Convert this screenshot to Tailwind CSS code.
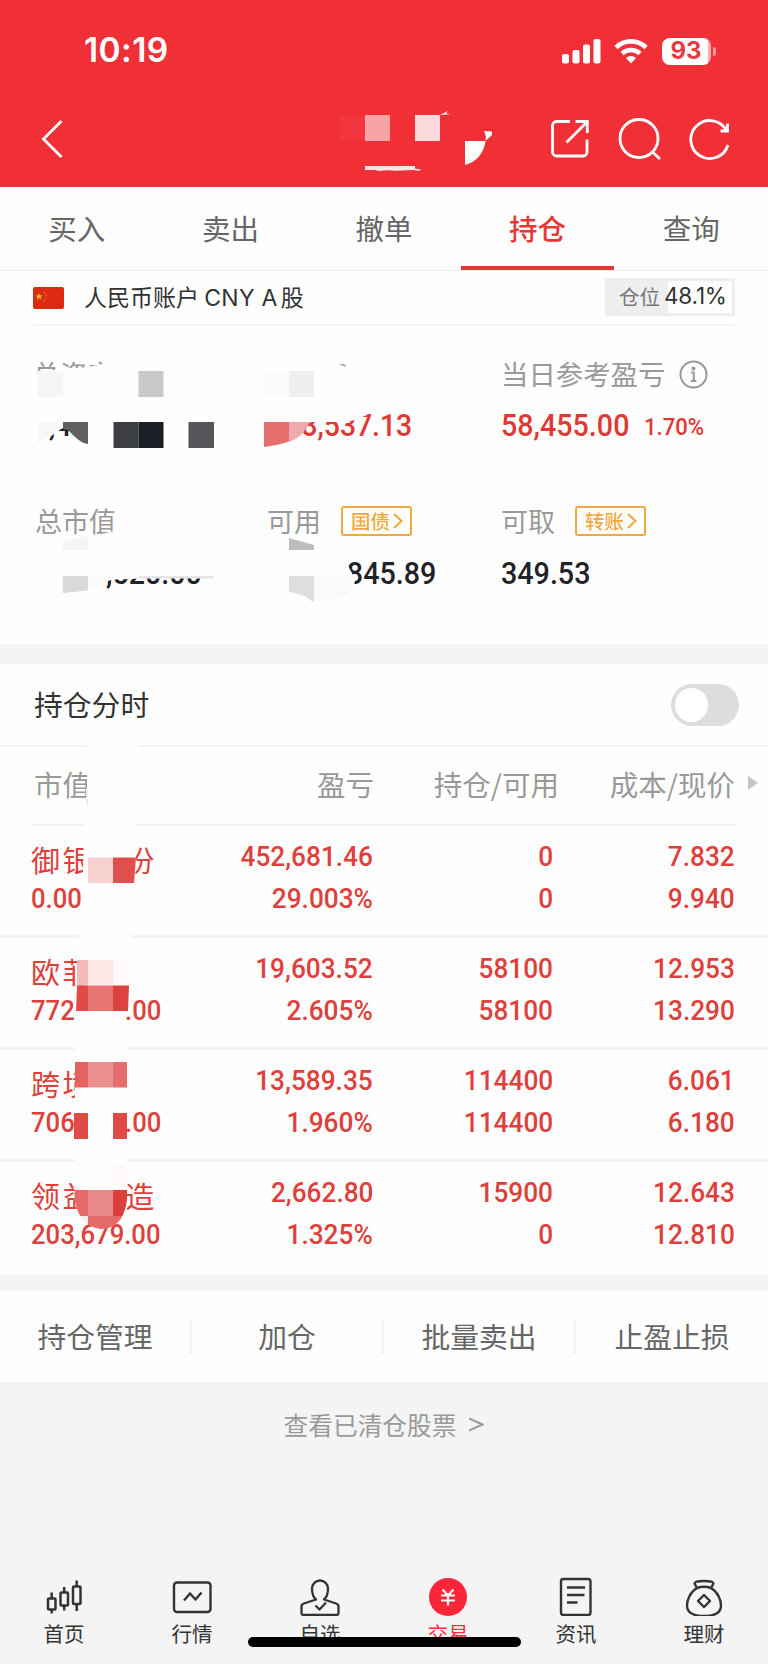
<!DOCTYPE html>
<html lang="zh-CN">
<head>
  <meta charset="UTF-8" />
  <meta name="viewport" content="width=device-width, initial-scale=1.0" />
  <title>持仓</title>
  <script src="https://cdn.jsdelivr.net/npm/@tailwindcss/browser@4"></script>
</head>
<body class="bg-[#f4f4f4] font-['Noto_Sans_CJK_SC',sans-serif]">

  <div class="relative w-[768px] h-[1664px] overflow-hidden flex flex-col">

    <!-- Status bar + nav -->
    <header class="h-[187px] shrink-0 bg-[#f12f37] text-white flex flex-col">
      <div class="h-[102px] flex items-center justify-between pl-[84px] pr-[52px]">
        <span class="font-['Inter',sans-serif] font-semibold text-[33.500px] leading-none tracking-[0.400px]">10:19</span>
        <div class="flex items-center">
          <svg class="w-[39px] h-[26px]" viewBox="0 0 39 26" fill="currentColor">
            <rect x="0" y="16" width="7" height="9.5" rx="2" />
            <rect x="10.5" y="12" width="7" height="13.5" rx="2" />
            <rect x="21" y="6.500" width="7" height="19" rx="2" />
            <rect x="31.500" y="1" width="7" height="24.500" rx="2" />
          </svg>
          <svg class="ml-[13px] w-[34px] h-[26px]" viewBox="0 0 34 26" fill="none" stroke="currentColor" stroke-width="4.6">
            <path d="M2 9.500a21.500 21.500 0 0 1 30 0" />
            <path d="M8 15.500a13.200 13.200 0 0 1 18 0" />
            <path d="M17 25.500l-5-5.500a7.500 7.500 0 0 1 10 0z" fill="currentColor" stroke="none" />
          </svg>
          <div class="ml-[14px] w-[49px] h-[27px] rounded-[8px] bg-[linear-gradient(to_right,#fff_94%,#f9a9ac_94%)] flex items-center justify-center pr-[1px]">
            <span class="font-['Inter',sans-serif] font-bold text-[24px] leading-none text-[#e93840]">93</span>
          </div>
          <div class="ml-[2px] w-[3px] h-[9px] rounded-r-full bg-[#f89a9e]"></div>
        </div>
      </div>
      <div class="h-[74px] flex items-center justify-between pl-[40px] pr-[37px]">
        <svg class="w-[24px] h-[40px]" viewBox="0 0 24 40" fill="none" stroke="currentColor" stroke-width="2.800"><path d="M21.500 2L3.500 20l18 18" /></svg>
        <div class="flex items-center gap-[27px]">
          <svg class="w-[42px] h-[42px]" viewBox="0 0 42 42" fill="none" stroke="currentColor" stroke-width="2.800">
            <path d="M21 3.500H7.500a4 4 0 0 0-4 4V34a4 4 0 0 0 4 4H34a4 4 0 0 0 4-4V21.500" />
            <path d="M17.500 24.500L38 4M26.500 3.500H38.300V15" />
          </svg>
          <svg class="w-[44px] h-[44px]" viewBox="0 0 44 44" fill="none" stroke="currentColor" stroke-width="2.800">
            <circle cx="21" cy="21.500" r="19" /><path d="M34 34.500l8 7.500" />
          </svg>
          <svg class="w-[42px] h-[44px]" viewBox="0 0 42 44" fill="none" stroke="currentColor" stroke-width="2.800">
            <path d="M39 28a19 19 0 1 1-1.500-14.500" /><path d="M38.500 6.500v7.500h-7" />
          </svg>
        </div>
      </div>
    </header>

    <!-- Tabs -->
    <nav class="h-[84px] shrink-0 bg-[#fefefe] border-b border-[#eeeeee] grid grid-cols-5 text-center text-[28.500px] leading-[81px] text-[#666]">
      <div>买入</div>
      <div>卖出</div>
      <div>撤单</div>
      <div class="text-[#e53935] font-medium shadow-[inset_0_-4px_#e03835]">持仓</div>
      <div>查询</div>
    </nav>

    <!-- Account -->
    <section class="h-[373px] shrink-0 bg-[#fefefe] px-[33px]">
      <div class="h-[55px] border-b-2 border-[#f6f6f6] flex items-center">
        <svg class="w-[31px] h-[22px] rounded-[2px]" viewBox="0 0 31 22">
          <rect width="31" height="22" fill="#dc2a10" />
          <path d="M6 6l1 2.600h2.700L7.500 10l1 2.700L6 11l-2.400 1.700.9-2.700-2.200-1.400H5z" fill="#fbc52c" />
          <circle cx="11" cy="5.500" r=".8" fill="#f08a20" /><circle cx="13" cy="8" r=".8" fill="#f08a20" />
          <circle cx="13" cy="11" r=".8" fill="#f08a20" /><circle cx="11" cy="13.500" r=".8" fill="#f08a20" />
        </svg>
        <span class="ml-[20px] text-[23px] leading-none text-[#333] whitespace-nowrap">人民币账户 <span class="font-['Inter',sans-serif] text-[23px] tracking-[0.300px]">CNY A</span><span class="ml-[3px]">股</span></span>
        <div class="ml-auto -mt-[2px] w-[130px] h-[38px] border-[3px] border-[#eeeef2] bg-[linear-gradient(to_right,#eeeeef_48%,#fefefe_48%)] flex items-center pl-[11px]">
          <span class="text-[20.500px] leading-none text-[#777]">仓位</span>
          <span class="ml-[4px] font-['Inter',sans-serif] text-[22.500px] leading-none tracking-[-0.200px] text-[#333]">48.1%</span>
        </div>
      </div>

      <div class="pt-[25px] grid grid-cols-[232px_236px_1fr]">
        <div>
          <div class="h-[46px] flex items-center text-[27px] text-[#999]">总资产</div>
          <div class="h-[57px] flex items-center pl-[16px] font-['Roboto',sans-serif] font-medium text-[31.500px] text-[#1f2228]"><span class="scale-x-90 origin-left">,4</span></div>
        </div>
        <div>
          <div class="h-[46px] flex items-center pl-[2px] text-[27px] text-[#999]"></div>
          <div class="h-[57px] w-[147px] flex items-center justify-end font-['Roboto',sans-serif] font-medium text-[31.500px] text-[#e03835]"><span class="scale-x-90 origin-right">8,537.13</span></div>
        </div>
        <div>
          <div class="h-[46px] flex items-center text-[27.400px] text-[#999] whitespace-nowrap">当日参考盈亏
            <svg class="ml-[14px] w-[29px] h-[29px]" viewBox="0 0 29 29" fill="none" stroke="#999" stroke-width="2">
              <circle cx="14.500" cy="14.500" r="13" /><circle cx="14.500" cy="8.500" r="2" fill="#999" stroke="none" /><path d="M12 12.500h2.800V21M11.800 21h5.600" />
            </svg>
          </div>
          <div class="h-[57px] flex items-center font-['Roboto',sans-serif] font-medium text-[31.500px] text-[#e03835]">
            <span class="w-[143px]"><span class="inline-block scale-x-91 origin-left">58,455.00</span></span>
            <span class="mt-[5px] text-[23.500px] scale-x-94 origin-left">1.70%</span>
          </div>
        </div>
      </div>

      <div class="pt-[44px] grid grid-cols-[232px_236px_1fr]">
        <div>
          <div class="h-[46px] flex items-center pl-[2px] text-[27px] text-[#999]">总市值</div>
          <div class="h-[59px] flex items-center pl-[73px] font-['Roboto',sans-serif] font-medium text-[31.500px] text-[#1f2228]"><span class="scale-x-91 origin-left">,520.00</span></div>
        </div>
        <div>
          <div class="h-[46px] flex items-center pl-[2px] text-[27px] text-[#999]">可用
            <div class="ml-[20px] w-[71px] h-[30px] border-2 border-[#f2a93b] rounded-[3px] flex items-center pl-[8px] text-[19.500px] leading-none font-medium text-[#f2a93b]">国债
              <svg class="ml-[3px] w-[10px] h-[18px]" viewBox="0 0 10 18" fill="none" stroke="currentColor" stroke-width="2.200"><path d="M1 2l7.500 7L1 16" /></svg>
            </div>
          </div>
          <div class="h-[59px] w-[171px] flex items-center justify-end font-['Roboto',sans-serif] font-medium text-[31.500px] text-[#1f2228]"><span class="scale-x-91 origin-right">845.89</span></div>
        </div>
        <div>
          <div class="h-[46px] flex items-center text-[27px] text-[#999]">可取
            <div class="ml-[20px] w-[71px] h-[30px] border-2 border-[#f2a93b] rounded-[3px] flex items-center pl-[8px] text-[19.500px] leading-none font-medium text-[#f2a93b]">转账
              <svg class="ml-[3px] w-[10px] h-[18px]" viewBox="0 0 10 18" fill="none" stroke="currentColor" stroke-width="2.200"><path d="M1 2l7.500 7L1 16" /></svg>
            </div>
          </div>
          <div class="h-[59px] flex items-center font-['Roboto',sans-serif] font-medium text-[31.500px] text-[#1f2228]"><span class="scale-x-91 origin-left">349.53</span></div>
        </div>
      </div>
    </section>

    <!-- Holdings -->
    <section class="mt-[20px] h-[611px] shrink-0 bg-[#fefefe]">
      <div class="h-[83px] border-b-2 border-[#f4f4f4] flex items-center justify-between pl-[34px] pr-[29px]">
        <span class="text-[28.800px] leading-none text-[#333]">持仓分时</span>
        <div class="w-[68px] h-[42px] rounded-full bg-[#dddddd] p-1"><div class="w-[33px] h-[34px] rounded-full bg-white"></div></div>
      </div>
      <div class="relative h-[79px] mr-[33px] border-b-2 border-[#f0f0f0] ml-[33px] pb-[2px] grid grid-cols-[341px_185px_176px] items-center text-right text-[28.500px] leading-none text-[#999]">
        <div class="flex justify-between"><span class="pl-[1px]">市值</span><span>盈亏</span></div>
        <div>持仓/可用</div>
        <div>成本/现价</div>
        <svg class="absolute -right-[23px] top-[29px] w-[10px] h-[14px]" viewBox="0 0 10 14"><path d="M0 0l10 7-10 7z" fill="#c4c4c4" /></svg>
      </div>
      <div id="rows"></div>
    </section>

    <!-- Actions -->
    <section class="mt-[16px] h-[91px] shrink-0 bg-[#fefefe] grid grid-cols-4 items-center text-center text-[28.800px] text-[#666]">
      <div class="h-[35px] leading-[34px] border-r-2 border-[#f3f3f3]">持仓管理</div>
      <div class="h-[35px] leading-[34px] border-r-2 border-[#f3f3f3]">加仓</div>
      <div class="h-[35px] leading-[34px] border-r-2 border-[#f3f3f3]">批量卖出</div>
      <div class="h-[35px] leading-[34px]">止盈止损</div>
    </section>

    <div class="h-[85px] shrink-0 flex items-center justify-center gap-[13px] text-[24.700px] text-[#999]">
      查看已清仓股票
      <svg class="w-[15px] h-[15px]" viewBox="0 0 15 15" fill="none" stroke="#999" stroke-width="2"><path d="M0 1.500l13.500 6L0 13.500" /></svg>
    </div>

    <!-- Bottom tabs -->
    <footer class="mt-auto h-[88px] shrink-0 grid grid-cols-6 text-[20.500px] leading-none text-[#333]">
      <div class="flex flex-col items-center gap-[7px]">
        <svg class="w-[40px] h-[40px]" viewBox="0 0 40 40" fill="none" stroke="currentColor" stroke-width="2.500">
          <rect x="4" y="22.500" width="7.500" height="11" rx="1" /><path d="M7.700 16.500v6M7.700 33.500v4" />
          <rect x="16.500" y="16.500" width="7.500" height="13" rx="1" /><path d="M20.200 11v5.500M20.200 29.500v5" />
          <rect x="29" y="10.500" width="7.500" height="17.500" rx="1" /><path d="M32.700 4.500v6M32.700 28v7" />
        </svg>
        <span>首页</span>
      </div>
      <div class="flex flex-col items-center gap-[7px]">
        <svg class="w-[40px] h-[40px]" viewBox="0 0 40 40" fill="none" stroke="currentColor" stroke-width="2.400">
          <rect x="2" y="6.500" width="36.500" height="29.500" rx="3" /><path d="M12 24.500l6-7 5.500 6 6-7" />
        </svg>
        <span>行情</span>
      </div>
      <div class="flex flex-col items-center gap-[7px]">
        <svg class="w-[40px] h-[40px]" viewBox="0 0 40 40" fill="none" stroke="currentColor" stroke-width="2.300" stroke-linejoin="round">
          <path d="M16 23.500C13 21 12 17 12 12.500a8 8 0 0 1 16 0C28 17 27 21 24 23.500L36 27.500c1.500.5 2.500 1.500 2.500 3V37a2 2 0 0 1-2 2h-33a2 2 0 0 1-2-2v-6.500c0-1.500 1-2.500 2.500-3z" />
          <path d="M15.500 29.500l4 4 6.500-7" />
        </svg>
        <span>自选</span>
      </div>
      <div class="flex flex-col items-center gap-[7px] text-[#fd2b3c]">
        <svg class="w-[40px] h-[40px]" viewBox="0 0 40 40" fill="none" stroke="#fff" stroke-width="2.200">
          <circle cx="20" cy="21" r="19" fill="#fd2538" stroke="none" />
          <path d="M14.500 13.500l5.500 6 5.500-6M13 19.500h14M13 24.500h14M20 19.500v10" />
        </svg>
        <span>交易</span>
      </div>
      <div class="flex flex-col items-center gap-[7px]">
        <svg class="w-[40px] h-[40px]" viewBox="0 0 40 40" fill="none" stroke="currentColor" stroke-width="2.400">
          <rect x="5" y="3" width="29.500" height="36" rx="2.500" /><path d="M11 11.500h18M11 19h17.500M11 26.500h10.500" />
        </svg>
        <span>资讯</span>
      </div>
      <div class="flex flex-col items-center gap-[7px]">
        <svg class="w-[40px] h-[40px]" viewBox="0 0 40 40" fill="none" stroke="currentColor" stroke-width="2.400" stroke-linejoin="round">
          <path d="M13 12L10.500 7.500Q11 5 20 5t9.500 2.500L27 12Q20 9.500 13 12z" />
          <path d="M13 12C6 16 3 24 3 29.500 3 37 9 40 20 40s17-3 17-10.500C37 24 34 16 27 12" />
          <path d="M20 19l6 6-6 6-6-6z" />
        </svg>
        <span>理财</span>
      </div>
    </footer>

    <!-- Home indicator -->
    <div class="absolute left-[248px] top-[1637px] w-[273px] h-[10px] rounded-full bg-black"></div>

    <!-- Mosaic brush strokes over private data -->
    <svg class="absolute inset-0 w-[768px] h-[1664px] pointer-events-none" viewBox="0 0 768 1664">
      <!-- title -->
      <rect x="340" y="115" width="25" height="26" fill="#f2363d" />
      <rect x="365" y="115" width="25" height="26" fill="#f8a3a8" />
      <rect x="415" y="115" width="25" height="26" fill="#fbd9db" />
      <path d="M440 115l8-4-2 2.500 4 .8-4 .2z" fill="#fff" />
      <path d="M465 141h20.500c-1.500 12-9 21-20.500 24z" fill="#fff" />
      <path d="M484 131l8 .5v3.500l-6.500 6c1-4 0-7-1.500-10z" fill="#fff" />
      <path d="M365 166h50v2.500l6 1-2 1.500-6-1-16 .8-10-.6-8 .8-4-.9h-10z" fill="#fde4e5" />

      <!-- total assets -->
      <path d="M34 376l9-4.500 20-3 22-1 20-4h12v40H34z" fill="#fefefe" />
      <rect x="38" y="371" width="25" height="26" fill="#f6f6f6" />
      <rect x="138.500" y="371" width="25" height="26" fill="#c9c9c9" />
      <path d="M34 405h60v30l-18-5-6-2-8 0-12 9-4 8H34z" fill="#fefefe" />
      <path d="M38 422h25v6l-12 7-13 8z" fill="#f7f7f7" />
      <path d="M63 422h25v22q-7-1-14-8l-6-6-5-1z" fill="#5f6062" />
      <rect x="113.500" y="422" width="25" height="26" fill="#3d3e42" />
      <rect x="138.500" y="422" width="25" height="26" fill="#1b1e24" />
      <rect x="188.500" y="422" width="25.500" height="26" fill="#55565b" />

      <!-- total profit -->
      <rect x="264" y="371" width="25" height="26" fill="#fbfbfb" />
      <rect x="289" y="371" width="25" height="26" fill="#efefef" />
      <path d="M339 364h5l2 2-1 1z" fill="#aaa" />
      <path d="M296 408h77l-6 7-12 5-10 2h-49z" fill="#fefefe" />
      <path d="M289 422h21l-7 11q-6 6-14 9z" fill="#efabab" />
      <path d="M264 422h25v19.500q-8 3-25 5.500z" fill="#e66f6c" />

      <!-- market value -->
      <path d="M90 537l28-7v10H90z" fill="#fefefe" />
      <path d="M63 541l25-5v14H63z" fill="#f5f5f5" />
      <path d="M100 555h110v22l-56 1-50 2z" fill="#fefefe" />
      <path d="M138.500 576H214v2.500h-75.500z" fill="#e6e6e6" />
      <path d="M88 576h25v3l-25 11z" fill="#fafafa" />
      <path d="M63 576h25v14.500l-25 2.500z" fill="#d9d9db" />

      <!-- available -->
      <path d="M289 538l25 7v5h-25z" fill="#bdbdbd" />
      <path d="M340 556h8v10l5 9 2 6-2 8h-13z" fill="#fefefe" />
      <path d="M314 576h39q0 14-10 22l-29 3z" fill="#fafafa" />
      <path d="M289 576h25v25.500q-3 0-8-5l-17-5z" fill="#dedede" />

      <!-- holdings column -->
      <rect x="87" y="742" width="52" height="70" fill="#fefefe" />
      <rect x="86" y="788" width="2" height="17" fill="#eaeaea" />
      <path d="M84 812h52v45.500l-1 26H83z" fill="#fefefe" />
      <rect x="88" y="857.500" width="25" height="25.500" fill="#f7d0d0" />
      <path d="M113 857.500h23l-2 25.500h-21z" fill="#e04f4c" />
      <rect x="79" y="930" width="52" height="30" fill="#fefefe" />

      <rect x="77" y="960" width="11" height="25.500" fill="#f4b9b9" />
      <rect x="88" y="960" width="25" height="25.500" fill="#fce6e6" />
      <rect x="113" y="960" width="16" height="25.500" fill="#fefafa" />
      <path d="M77 985.500h11V1011H76z" fill="#e04a47" />
      <rect x="88" y="985.500" width="25" height="25.500" fill="#e87573" />
      <path d="M113 985.500h16l-1 25.500h-15z" fill="#de423f" />

      <rect x="75" y="1044" width="52" height="69" fill="#fefefe" />
      <rect x="75" y="1062" width="13" height="25.500" fill="#e46361" />
      <rect x="88" y="1062" width="25" height="25.500" fill="#ea8f8e" />
      <rect x="113" y="1062" width="14" height="25.500" fill="#e66d6b" />
      <rect x="74" y="1113" width="14" height="26" fill="#e04a47" />
      <rect x="113" y="1113" width="14" height="26" fill="#e04845" />

      <clipPath id="dab"><path d="M74.500 1150H127v50q-4 29-26 29-22-2-26.500-30z" /></clipPath>
      <g clip-path="url(#dab)">
        <rect x="74" y="1150" width="53" height="66" fill="#fefefe" />
        <rect x="113" y="1164" width="14" height="26" fill="#fefafa" />
        <rect x="74" y="1190" width="14" height="26" fill="#e46967" />
        <rect x="88" y="1190" width="25" height="26" fill="#ea8a88" />
        <rect x="113" y="1190" width="14" height="26" fill="#dc403c" />
        <rect x="76" y="1216" width="12" height="13" fill="#fceeee" />
        <rect x="88" y="1216" width="39" height="13" fill="#e46a68" />
      </g>
    </svg>
  </div>

  <script>
    const rows = [
      { name: '御银股份', value: '0.00', profit: ['452,681.46', '29.003%'], qty: ['0', '0'], price: ['7.832', '9.940'] },
      { name: '欧菲', value: '772', tail: '.00', profit: ['19,603.52', '2.605%'], qty: ['58100', '58100'], price: ['12.953', '13.290'] },
      { name: '跨境', value: '706', tail: '.00', profit: ['13,589.35', '1.960%'], qty: ['114400', '114400'], price: ['6.061', '6.180'] },
      { name: '领益智造', value: '203,679.00', profit: ['2,662.80', '1.325%'], qty: ['15900', '0'], price: ['12.643', '12.810'] },
    ];

    const pair = (p) => `
      <div class="flex flex-col items-end">
        <span class="scale-x-92 origin-right">${p[0]}</span>
        <span class="scale-x-92 origin-right">${p[1]}</span>
      </div>`;

    document.getElementById('rows').innerHTML = rows.map((r) => `
      <div class="h-[112px] pt-[10px] pl-[31px] border-b-3 last:border-b-0 border-[#f4f4f4] grid grid-cols-[150px_192px_180px_182px] font-['Roboto',sans-serif] font-medium text-[28.500px] leading-[41.500px] text-[#de403c]">
        <div>
          <div class="h-[41.500px] pt-[3px] font-['Noto_Sans_CJK_SC',sans-serif] font-normal text-[29px] tracking-[2.400px]">${r.name}</div>
          <div class="w-[130px] flex justify-between">
            <span class="scale-x-90 origin-left">${r.value}</span>
            <span class="scale-x-90 origin-right">${r.tail || ''}</span>
          </div>
        </div>
        ${pair(r.profit)}${pair(r.qty)}${pair(r.price)}
      </div>`).join('');
  </script>

</body>
</html>
